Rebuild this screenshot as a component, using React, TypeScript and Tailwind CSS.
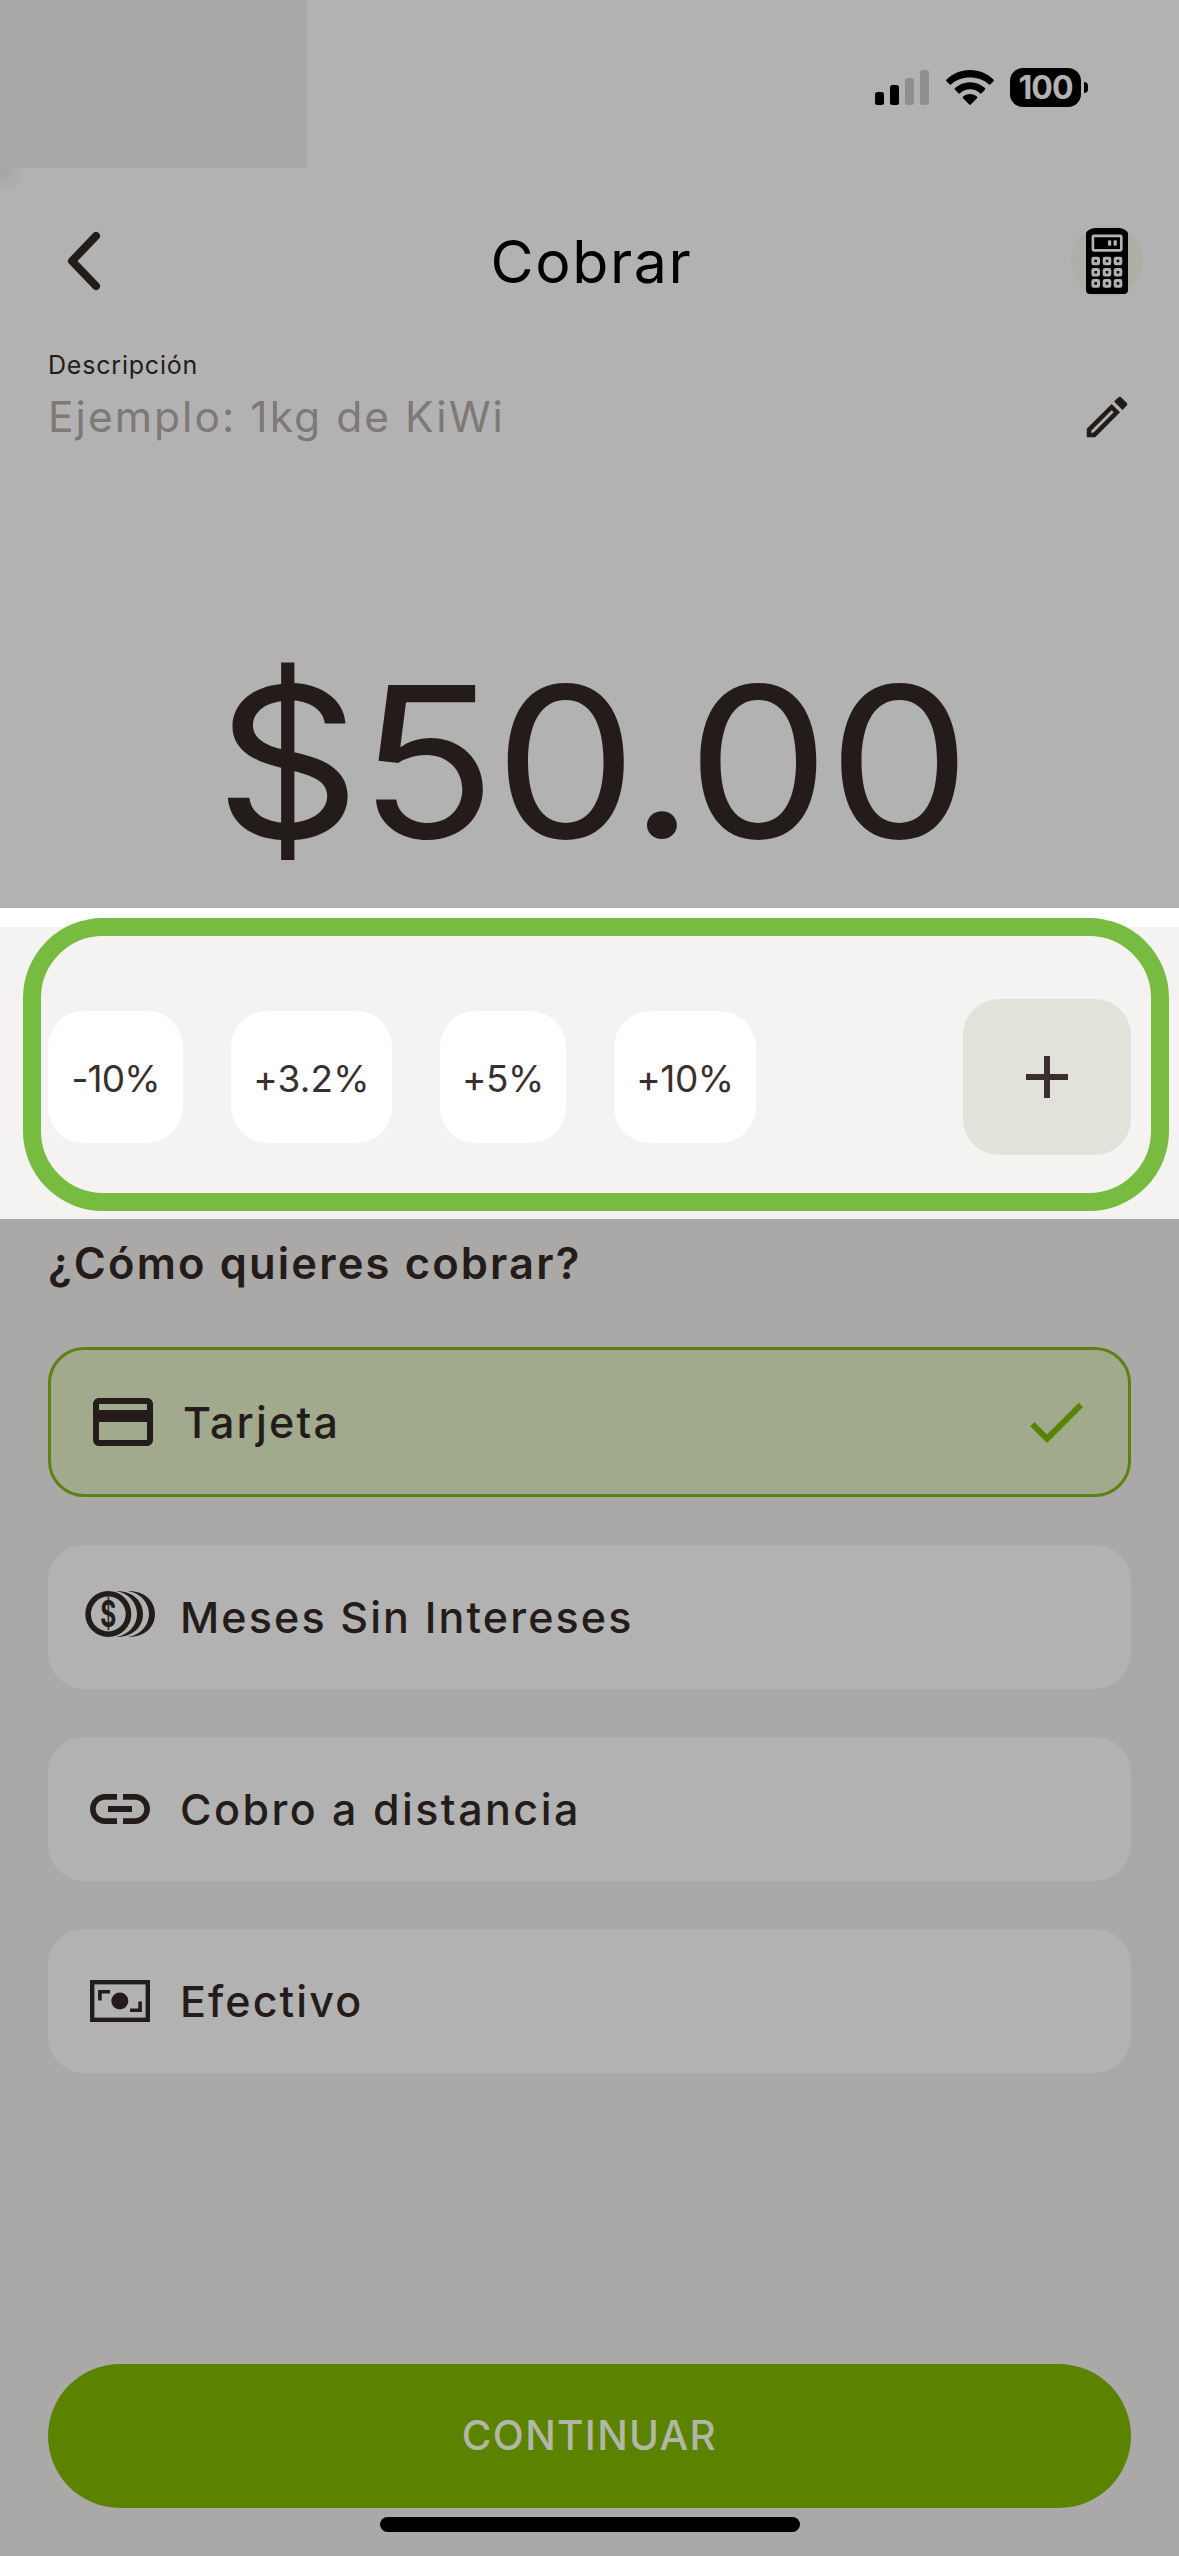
import { useState } from "react";
import type { ReactNode } from "react";
import clsx from "clsx";

interface PaymentMethod {
  id: string;
  label: string;
  spacing: string;
  icon: ReactNode;
}

const SignalIcon = () => (
  <svg width="54" height="35" viewBox="0 0 54 35">
    <rect x="0" y="22" width="9" height="13" rx="2.5" />
    <rect x="15" y="15" width="9" height="20" rx="2.5" />
    <rect x="30" y="8" width="9" height="27" rx="2.5" fill="#8f8f8f" />
    <rect x="45" y="0" width="9" height="35" rx="2.5" fill="#8f8f8f" />
  </svg>
);

const WifiIcon = () => (
  <svg width="48" height="35" viewBox="0 0 48 35">
    <path d="M24 0C14.800 0 6.500 3.600.500 9.500a1.200 1.200 0 0 0 0 1.700l3 3.100a1.200 1.200 0 0 0 1.700 0C10 9.600 16.700 7.400 24 7.400s14 2.200 18.800 6.900a1.200 1.200 0 0 0 1.700 0l3-3.100a1.200 1.200 0 0 0 0-1.700C41.500 3.600 33.200 0 24 0z" />
    <path d="M24 12.200c-5.800 0-11 2.200-15 5.900a1.200 1.200 0 0 0 0 1.700l3.400 3.400a1.200 1.200 0 0 0 1.700 0c2.700-2.400 6.100-3.900 9.900-3.900s7.200 1.500 9.900 3.900a1.200 1.200 0 0 0 1.700 0l3.400-3.400a1.200 1.200 0 0 0 0-1.700c-4-3.700-9.200-5.900-15-5.900z" />
    <path d="M24 23.900c-2.700 0-5.100 1-6.900 2.700a1.100 1.100 0 0 0 0 1.600l6.100 6.300a1.100 1.100 0 0 0 1.600 0l6.100-6.300a1.100 1.100 0 0 0 0-1.600c-1.800-1.700-4.200-2.700-6.900-2.700z" />
  </svg>
);

const CalculatorIcon = () => (
  <svg width="42" height="66" viewBox="0 0 42 66">
    <path d="M9 0h24c3.500 0 9 3 9 5.500V62a4 4 0 0 1-4 4H4a4 4 0 0 1-4-4V5.500C0 3 5.500 0 9 0z" />
    <rect x="6.900" y="7.900" width="28.400" height="14.400" rx="1" fill="none" stroke="#b2b2b2" strokeWidth="2.700" />
    <rect x="22" y="12.200" width="3.200" height="5.600" rx="1" fill="#b2b2b2" />
    <rect x="27.600" y="12.200" width="3.200" height="5.600" rx="1" fill="#b2b2b2" />
    {[33, 44.2, 55.4].map((y) =>
      [9.7, 21, 32].map((x) => (
        <rect
          key={`${x}-${y}`}
          x={x - 2.8}
          y={y - 2.8}
          width="5.6"
          height="5.6"
          rx="0.8"
          fill="none"
          stroke="#b2b2b2"
          strokeWidth="3"
        />
      ))
    )}
  </svg>
);

const CardIcon = () => (
  <svg width="72" height="72" viewBox="0 0 24 24" fill="currentColor">
    <path d="M20 4H4c-1.110 0-1.990.890-1.990 2L2 18c0 1.110.890 2 2 2h16c1.110 0 2-.890 2-2V6c0-1.110-.890-2-2-2zm0 14H4v-6h16v6zm0-10H4V6h16v2z" />
  </svg>
);

const CoinsIcon = () => (
  <svg width="72" height="72" viewBox="0 0 72 72" fill="currentColor">
    <circle cx="24.300" cy="33" r="20.200" fill="none" stroke="currentColor" strokeWidth="5.600" />
    <path d="M32 10c17 0 27 10 27 23s-10 23-27 23c12-2 21-11 21-23S44 12 32 10z" />
    <path d="M44 10c17 0 27 10 27 23s-10 23-27 23c12-2 21-11 21-23S56 12 44 10z" />
    <g transform="translate(24.300 46) scale(0.660 1)">
      <text textAnchor="middle" fontFamily="Inter, sans-serif" fontSize="37" fontWeight="700">
        $
      </text>
    </g>
  </svg>
);

const LinkIcon = () => (
  <svg width="72" height="72" viewBox="0 0 24 24" fill="currentColor">
    <path d="M3.900 12c0-1.710 1.390-3.100 3.100-3.100h4V7H7c-2.760 0-5 2.240-5 5s2.240 5 5 5h4v-1.900H7c-1.710 0-3.100-1.390-3.100-3.100zM8 13h8v-2H8v2zm9-6h-4v1.900h4c1.710 0 3.100 1.390 3.100 3.100s-1.390 3.100-3.100 3.100h-4V17h4c2.760 0 5-2.240 5-5s-2.240-5-5-5z" />
  </svg>
);

const CashIcon = () => (
  <svg width="72" height="72" viewBox="0 0 72 72" fill="none" stroke="currentColor">
    <rect x="8.200" y="17.200" width="55.600" height="37.600" strokeWidth="4.400" />
    <path d="M15.900 35.500v-8.700H26M56.100 36.500v8.700H46" strokeWidth="3.600" />
    <circle cx="35.800" cy="36" r="8.500" fill="currentColor" stroke="none" />
  </svg>
);

const quickAdjustments = [
  { label: "-10%", className: "w-[135px] tracking-[-0.9px]" },
  { label: "+3.2%", className: "w-[161px] tracking-[0.2px]" },
  { label: "+5%", className: "w-[126px] tracking-[-0.5px]" },
  { label: "+10%", className: "w-[142px] tracking-[-0.4px]" },
];

const methods: PaymentMethod[] = [
  { id: "card", label: "Tarjeta", spacing: "tracking-[2.14px]", icon: <CardIcon /> },
  { id: "msi", label: "Meses Sin Intereses", spacing: "tracking-[2.12px]", icon: <CoinsIcon /> },
  { id: "link", label: "Cobro a distancia", spacing: "tracking-[2.46px]", icon: <LinkIcon /> },
  { id: "cash", label: "Efectivo", spacing: "tracking-[2.1px]", icon: <CashIcon /> },
];

export default function App() {
  const [method, setMethod] = useState("card");

  return (
    <div className="flex h-[2556px] w-[1179px] flex-col overflow-hidden bg-[#aba9a7] font-[Inter,sans-serif] text-[#241c1a]">
      <div className="flex h-[908px] flex-col bg-[#b2b2b2]">
        {/* status bar */}
        <div className="flex h-[168px] justify-between">
          <div className="h-[168px] w-[307px] bg-[#a9a9a9]" />
          <div className="mt-[68px] mr-[91px] flex h-[39px] items-center text-black">
            <SignalIcon />
            <div className="ml-[17px]">
              <WifiIcon />
            </div>
            <div className="ml-4 flex h-[39px] w-[71px] items-center justify-center rounded-[13px] bg-black text-[32px] leading-none font-bold tracking-[-1px] text-[#b2b2b2]">
              100
            </div>
            <div className="ml-[3px] h-[11px] w-1 rounded-r-full bg-black" />
          </div>
        </div>

        {/* header */}
        <div className="flex h-[186px] items-center justify-between bg-[radial-gradient(circle_at_0_0,#a3a3a5_0,#b2b2b2_28px)] pr-9 pl-[60px]">
          <button className="w-[72px]">
            <svg width="48" height="64" viewBox="0 0 48 64" fill="none">
              <path
                d="M36 7L12 32l24 25"
                stroke="#241c1a"
                strokeWidth="8"
                strokeLinecap="round"
                strokeLinejoin="round"
              />
            </svg>
          </button>
          <h1 className="pl-1 text-[59px] leading-none tracking-[1.6px] text-black">Cobrar</h1>
          <button className="ml-[24px] flex size-[72px] items-center justify-center rounded-full bg-[#acafa6]">
            <CalculatorIcon />
          </button>
        </div>

        {/* description field */}
        <div className="pr-[45px] pl-12">
          <label className="block text-[25px] leading-[23px] tracking-[0.8px]">Descripción</label>
          <div className="flex h-20 items-center justify-between">
            <span className="text-[42.5px] leading-none tracking-[2.05px] text-[#7e7876]">
              Ejemplo: 1kg de KiWi
            </span>
            <svg width="54" height="54" viewBox="0 0 24 24" fill="currentColor">
              <path d="M14.060 9.020l.920.920L5.920 19H5v-.920l9.060-9.060M17.660 3c-.250 0-.510.100-.700.290l-1.830 1.830 3.750 3.750 1.830-1.830c.390-.390.390-1.020 0-1.410l-2.340-2.340c-.200-.200-.450-.290-.710-.290zm-3.600 3.190L3 17.250V21h3.750L17.810 9.940l-3.750-3.750z" />
            </svg>
          </div>
        </div>

        <div className="mt-[205px] flex h-[200px] items-center justify-center pl-[5px] text-[210px] leading-none tracking-[-2px]">
          <span className="scale-x-[1.08]">$50.00</span>
        </div>
      </div>

      {/* quick adjustments */}
      <div className="relative h-[311px] border-t-[19px] border-white bg-[#f4f3f1]">
        <div className="flex h-[300px] items-center gap-12 px-12 text-[37px] text-[#3a2f2c]">
          {quickAdjustments.map((a) => (
            <button
              key={a.label}
              className={clsx(
                "flex h-[132px] items-center justify-center rounded-[36px] bg-white pt-1",
                a.className
              )}
            >
              {a.label}
            </button>
          ))}
          <button className="ml-auto flex h-[156px] w-[168px] items-center justify-center rounded-[36px] bg-[#e1e2da]">
            <svg width="72" height="72" viewBox="0 0 24 24" fill="currentColor">
              <path d="M19 13h-6v6h-2v-6H5v-2h6V5h2v6h6v2z" />
            </svg>
          </button>
        </div>
        <div className="pointer-events-none absolute top-[-9px] left-[23px] h-[293px] w-[1146px] rounded-[80px] border-[18px] border-[#77bb41]" />
      </div>

      {/* payment methods */}
      <div className="flex flex-1 flex-col px-12">
        <h2 className="h-[88px] text-[43.5px] leading-[88px] font-semibold tracking-[2.15px]">
          ¿Cómo quieres cobrar?
        </h2>

        <div className="mt-10 flex flex-col gap-12">
          {methods.map((m) => (
            <button
              key={m.id}
              onClick={() => setMethod(m.id)}
              className={clsx(
                "flex items-center rounded-[36px] px-9",
                method === m.id
                  ? "h-[150px] border-[3px] border-[#5f8012] bg-[#a2aa8e]"
                  : "h-36 bg-[#b2b2b2]"
              )}
            >
              {m.icon}
              <span className={clsx("ml-6 text-[43px] leading-none font-medium", m.spacing)}>
                {m.label}
              </span>
              {method === m.id && (
                <svg className="ml-auto text-[#5b8300]" width="72" height="72" viewBox="0 0 24 24" fill="currentColor">
                  <path d="M9 16.170L4.830 12l-1.420 1.410L9 19 21 7l-1.410-1.410z" />
                </svg>
              )}
            </button>
          ))}
        </div>

        <button className="mt-auto flex h-36 items-center justify-center rounded-full bg-[#5b8300] text-[40.5px] font-medium tracking-[1.3px] text-[#b2b6a5]">
          CONTINUAR
        </button>
        <div className="mt-[9px] mb-6 h-[15px] w-[420px] self-center rounded-full bg-black" />
      </div>
    </div>
  );
}
